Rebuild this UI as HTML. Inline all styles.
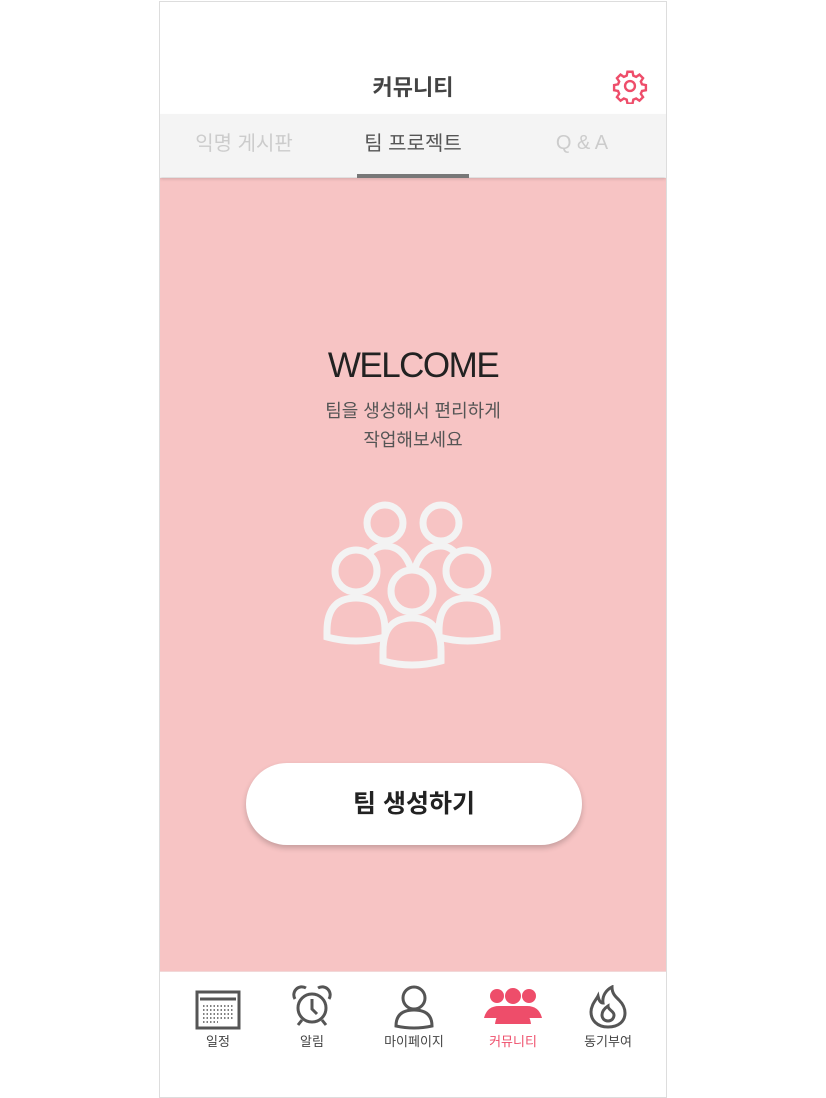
<!DOCTYPE html>
<html><head><meta charset="utf-8"><style>
body{margin:0;width:826px;height:1098px;background:#fff;font-family:"Liberation Sans","Noto Sans CJK KR",sans-serif;position:relative;overflow:hidden}
.frame{position:absolute;left:159px;top:1px;width:506px;height:1095px;border:1px solid #ddd;background:#fff;overflow:hidden}
.abs{position:absolute}
</style></head><body>
<div class="frame">
 <div class="abs" style="left:0;top:176px;width:506px;height:793px;background:#f7c4c4"></div>
 <div class="abs" style="left:0;top:68px;width:506px;text-align:center;font-size:22px;font-weight:bold;color:#444">커뮤니티</div>
 <svg class="abs" style="left:452px;top:66px" width="36" height="36" viewBox="0 0 24 24" fill="none" stroke="#ee4d6a" stroke-width="1.6"><path d="M10.3 2.5h3.4l.5 2.6 1.9.8 2.2-1.5 2.4 2.4-1.5 2.2.8 1.9 2.6.5v3.4l-2.6.5-.8 1.9 1.5 2.2-2.4 2.4-2.2-1.5-1.9.8-.5 2.6h-3.4l-.5-2.6-1.9-.8-2.2 1.5-2.4-2.4 1.5-2.2-.8-1.9-2.6-.5v-3.4l2.6-.5.8-1.9-1.5-2.2 2.4-2.4 2.2 1.5 1.9-.8z"/><circle cx="12" cy="12" r="3.3"/></svg>
 <div class="abs" style="left:0;top:112px;width:506px;height:63px;background:#f4f4f4;box-shadow:0 2px 3px rgba(0,0,0,.15)">
  <div class="abs" style="left:0;top:17px;width:168px;line-height:26px;text-align:center;font-size:20px;color:#ccc">익명 게시판</div>
  <div class="abs" style="left:168px;top:17px;width:170px;line-height:26px;text-align:center;font-size:20px;color:#555">팀 프로젝트</div>
  <div class="abs" style="left:338px;top:16px;width:168px;line-height:26px;text-align:center;font-size:20px;color:#ccc;font-family:'Liberation Sans',sans-serif">Q &amp; A</div>
  <div class="abs" style="left:197px;top:60px;width:112px;height:4px;background:#777"></div>
 </div>
 <div class="abs" style="left:0;top:344px;width:506px;text-align:center;font-size:35px;color:#222;letter-spacing:-1.5px">WELCOME</div>
 <div class="abs" style="left:0;top:395px;width:506px;text-align:center;font-size:18px;line-height:29px;color:#555">팀을 생성해서 편리하게<br>작업해보세요</div>
 <svg class="abs" style="left:151px;top:489px" width="200" height="190" viewBox="310 490 200 190" fill="#f7c4c4" stroke="#f3f3f3" stroke-width="7">
  <circle cx="384" cy="522" r="18"/><circle cx="440" cy="522" r="18"/>
  <path d="M355 580 Q365 545 384 545 Q405 545 412 575 Q418 545 440 545 Q458 545 468 580"/>
  <circle cx="355" cy="570" r="21"/><circle cx="466" cy="570" r="21"/>
  <path d="M326 636 V630 Q326 597 355 597 Q384 597 384 630 V636 Q355 644 326 636Z"/>
  <path d="M438 636 V630 Q438 597 466 597 Q496 597 496 630 V636 Q466 644 438 636Z"/>
  <circle cx="411" cy="590" r="21"/>
  <path d="M382 660 V650 Q382 617 411 617 Q440 617 440 650 V660 Q411 668 382 660Z"/>
 </svg>
 <div class="abs" style="left:86px;top:761px;width:336px;height:82px;border-radius:41px;background:#fff;box-shadow:0 3px 6px rgba(0,0,0,.2);text-align:center;line-height:82px;font-size:25px;font-weight:bold;color:#222">팀 생성하기</div>
 <div class="abs" style="left:0;top:969px;width:506px;height:1px;background:#f2d8d8"></div>
 <svg class="abs" style="left:35px;top:988px" width="46" height="40" viewBox="0 0 46 40" fill="none" stroke="#555"><rect x="2" y="2" width="42" height="36" stroke-width="3"/><line x1="5" y1="9" x2="41" y2="9" stroke-width="3"/><path d="M8 16h30M8 20h30M8 24h30M8 28h30M8 32h15" stroke-width="1.5" stroke-dasharray="1.5 2"/></svg>
 <div class="abs" style="left:18px;top:1029px;width:80px;text-align:center;font-size:13px;color:#444">일정</div>
 <svg class="abs" style="left:130px;top:982px" width="44" height="44" viewBox="0 0 44 44" fill="none" stroke="#555" stroke-width="3"><circle cx="22" cy="24" r="14"/><path d="M22 15v10l5 5"/><path d="M5 15a8 8 0 0 1 11-11M39 15a8 8 0 0 0-11-11M12 36l-4 5M32 36l4 5"/></svg>
 <div class="abs" style="left:112px;top:1029px;width:80px;text-align:center;font-size:13px;color:#444">알림</div>
 <svg class="abs" style="left:232px;top:982px" width="44" height="46" viewBox="0 0 44 46" fill="none" stroke="#555" stroke-width="3"><circle cx="22" cy="14" r="11"/><path d="M4 42Q4 26 22 26Q40 26 40 42Q22 46 4 42Z"/></svg>
 <div class="abs" style="left:204px;top:1029px;width:100px;text-align:center;font-size:13px;color:#444">마이페이지</div>
 <svg class="abs" style="left:323px;top:984px" width="60" height="40" viewBox="0 0 60 40" fill="#ee4d6a"><circle cx="14" cy="10" r="7"/><circle cx="30" cy="10" r="8"/><circle cx="46" cy="10" r="7"/><path d="M1 32Q4 20 16 20L44 20Q56 20 59 32Z"/><path d="M12 38Q14 22 30 22Q46 22 48 38Z"/></svg>
 <div class="abs" style="left:303px;top:1029px;width:100px;text-align:center;font-size:13px;color:#ee4d6a">커뮤니티</div>
 <svg class="abs" style="left:428px;top:983px" width="40" height="45" viewBox="0 0 40 45" fill="none" stroke="#555" stroke-width="3"><path d="M20 42C9 42 3 35 3 27C3 20 8 15 10 11C11 16 13 18 15 18C14 11 18 5 24 2C24 9 28 12 31 15C35 19 37 23 37 28C37 36 31 42 20 42Z"/><path d="M20 36C16 36 14 33 14 30C14 26 17 23 20 21C20 25 26 26 26 30C26 33 24 36 20 36Z"/></svg>
 <div class="abs" style="left:398px;top:1029px;width:100px;text-align:center;font-size:13px;color:#444">동기부여</div>
</div>
</body></html>
